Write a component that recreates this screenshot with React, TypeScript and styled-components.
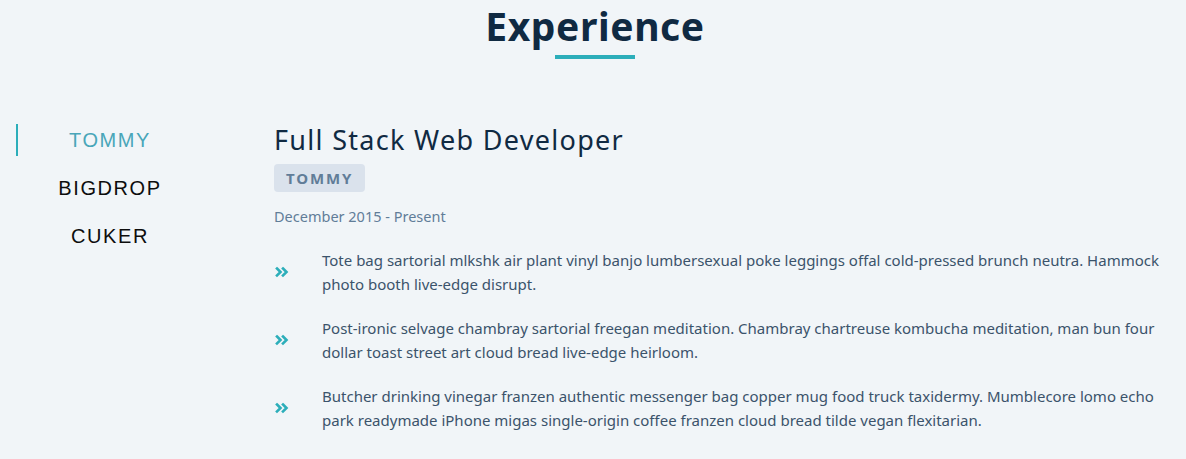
import React, { useState } from "react";
import styled, { createGlobalStyle } from "styled-components";

const Global = createGlobalStyle`
  * { box-sizing: border-box; margin: 0; padding: 0; }
  body { background: #f1f5f8; font-family: "Noto Sans", "Open Sans", sans-serif; color: #102a42; }
`;

const Section = styled.section`
  padding: 0 16px;
  width: 1186px;
  height: 459px;
  overflow: hidden;
`;

const TitleBox = styled.div`
  display: flex;
  flex-direction: column;
  align-items: center;
  padding-left: 4px;
  margin-bottom: 65px;
`;

const Title = styled.h2`
  font-family: "Noto Sans", sans-serif;
  font-size: 39px;
  font-weight: 700;
  letter-spacing: 0.6px;
  line-height: 52px;
  color: #102a42;
`;

const Underline = styled.div`
  width: 80px;
  height: 4px;
  margin-top: 3px;
  background: #2caeba;
`;

const Center = styled.div`
  display: grid;
  grid-template-columns: 188px 1fr;
  column-gap: 70px;
  align-items: start;
`;

const BtnContainer = styled.div`
  display: flex;
  flex-direction: column;
  gap: 16px;
`;

const JobBtn = styled.button<{ $active?: boolean }>`
  background: transparent;
  border: none;
  border-left: 2px solid ${(p) => (p.$active ? "#2caeba" : "transparent")};
  height: 32px;
  font-family: "Liberation Sans", Arial, sans-serif;
  font-size: 20px;
  letter-spacing: 1.6px;
  color: ${(p) => (p.$active ? "#49a6b9" : "#0d0d0d")};
  cursor: pointer;
  text-align: center;
  padding-right: 2px;
`;

const JobInfo = styled.article`
  display: flex;
  flex-direction: column;
  align-items: flex-start;
`;

const JobTitle = styled.h3`
  font-family: "Noto Sans", sans-serif;
  font-weight: 400;
  font-size: 27px;
  letter-spacing: 1.3px;
  line-height: 36px;
  color: #102a42;
  margin-top: -2px;
`;

const Company = styled.h4`
  display: inline-block;
  margin-top: 6px;
  padding: 0 12px;
  height: 28px;
  line-height: 28px;
  border-radius: 4px;
  background: #dae2ec;
  color: #617d98;
  font-family: "Noto Sans", sans-serif;
  font-weight: 700;
  font-size: 15px;
  letter-spacing: 1.9px;
`;

const JobDate = styled.p`
  margin-top: 13px;
  font-size: 14.5px;
  line-height: 22px;
  color: #617d98;
  margin-bottom: 21px;
`;

const Desc = styled.div`
  display: grid;
  grid-template-columns: 16px 1fr;
  column-gap: 32px;
  align-items: center;
  margin-bottom: 20px;
`;

const Icon = styled.svg`
  width: 14px;
  height: 14px;
  margin-left: 1px;
  margin-top: 0px;
  color: #2caeba;
`;

const DescText = styled.p`
  font-size: 15px;
  line-height: 24px;
  color: #3b536b;
  padding-right: 8px;
`;

const Chevrons = () => (
  <Icon viewBox="0 0 14 14" fill="none" stroke="currentColor" strokeWidth="2.6" strokeLinecap="square" strokeLinejoin="miter">
    <polyline points="2,3.5 5.5,7 2,10.5" />
    <polyline points="8,3.5 11.5,7 8,10.5" />
  </Icon>
);

const duties = [
  "Tote bag sartorial mlkshk air plant vinyl banjo lumbersexual poke leggings offal cold-pressed brunch neutra. Hammock photo booth live-edge disrupt.",
  "Post-ironic selvage chambray sartorial freegan meditation. Chambray chartreuse kombucha meditation, man bun four dollar toast street art cloud bread live-edge heirloom.",
  "Butcher drinking vinegar franzen authentic messenger bag copper mug food truck taxidermy. Mumblecore lomo echo park readymade iPhone migas single-origin coffee franzen cloud bread tilde vegan flexitarian.",
];

export default function App() {
  const [active, setActive] = useState(0);
  const companies = ["TOMMY", "BIGDROP", "CUKER"];
  return (
    <>
      <Global />
      <Section>
        <TitleBox>
          <Title>Experience</Title>
          <Underline />
        </TitleBox>
        <Center>
          <BtnContainer>
            {companies.map((c, i) => (
              <JobBtn key={c} $active={i === active} onClick={() => setActive(i)}>
                {c}
              </JobBtn>
            ))}
          </BtnContainer>
          <JobInfo>
            <JobTitle>Full Stack Web Developer</JobTitle>
            <Company>TOMMY</Company>
            <JobDate>December 2015 - Present</JobDate>
            {duties.map((d) => (
              <Desc key={d}>
                <Chevrons />
                <DescText>{d}</DescText>
              </Desc>
            ))}
          </JobInfo>
        </Center>
      </Section>
    </>
  );
}
